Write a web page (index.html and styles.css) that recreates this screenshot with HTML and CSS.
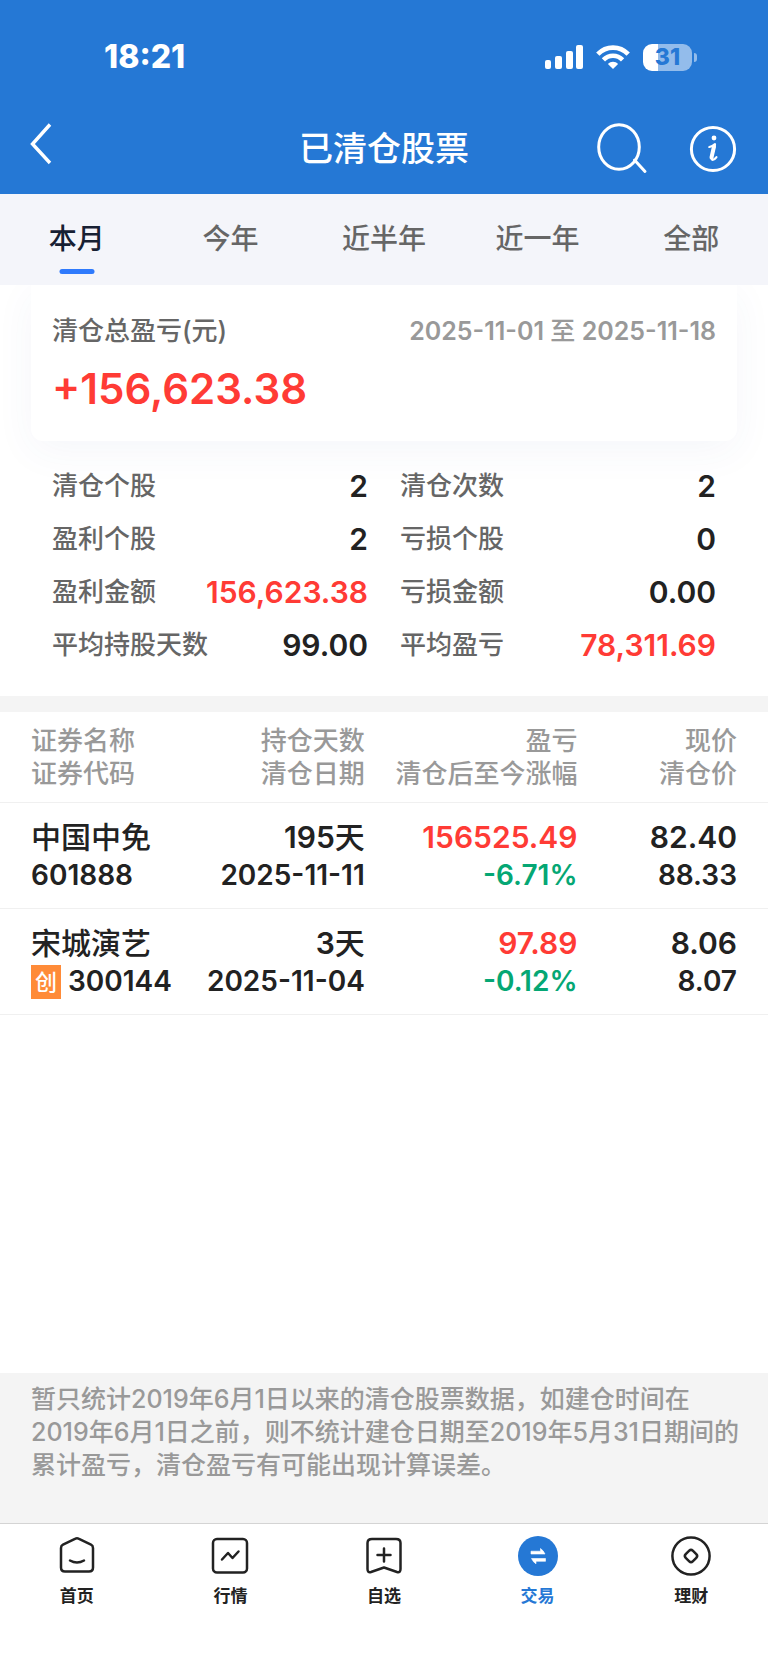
FILE: index.html
```html
<!DOCTYPE html>
<html lang="zh-CN">
<head>
<meta charset="utf-8">
<meta name="viewport" content="width=device-width, initial-scale=1">
<title>已清仓股票</title>
<link rel="stylesheet" href="styles.css">
</head>
<body>
<header class="header">
  <div class="status">
    <time class="status-time">18:21</time>
    <div class="status-icons">
      <svg class="signal" viewBox="0 0 38 24" fill="currentColor" aria-hidden="true">
        <rect x="0" y="15" width="6" height="9" rx="2"/>
        <rect x="10" y="11" width="7" height="13" rx="2"/>
        <rect x="21" y="6" width="7" height="18" rx="2"/>
        <rect x="31" y="0" width="7" height="24" rx="2"/>
      </svg>
      <svg class="wifi" viewBox="0 0 34 24" fill="none" stroke="currentColor" stroke-width="4.6" aria-hidden="true">
        <path d="M1.8 9.2C10.2 .4 23.8 .4 32.2 9.2"/>
        <path d="M7.4 14.9C12.8 9.4 21.2 9.4 26.6 14.9"/>
        <path d="M17 24L11.9 18.9C14.8 16.1 19.2 16.1 22.1 18.9Z" fill="currentColor" stroke="none"/>
      </svg>
      <div class="battery"><span class="battery-level">31</span></div>
    </div>
  </div>
  <div class="navbar">
    <button class="icon-button" type="button" aria-label="返回">
      <svg viewBox="0 0 56 56" fill="none" stroke="currentColor" stroke-width="3.4"><path d="M22 3.500L4.500 23L22 42"/></svg>
    </button>
    <h1 class="title">已清仓股票</h1>
    <div class="actions">
      <button class="icon-button" type="button" aria-label="搜索">
        <svg viewBox="0 0 56 56" fill="none" stroke="currentColor" stroke-width="3"><ellipse cx="27" cy="26" rx="20.3" ry="22.3"/><path d="M42.5 39L53 50.5" stroke-linecap="round"/></svg>
      </button>
      <button class="icon-button" type="button" aria-label="说明">
        <svg viewBox="0 0 56 56" fill="none" stroke="currentColor" stroke-width="3" stroke-linecap="round" stroke-linejoin="round"><circle cx="29" cy="28" r="21.6"/><circle cx="30" cy="17" r="2.4" fill="currentColor" stroke="none"/><path d="M25.3 26C27.5 25.6 29.5 24.5 31 23.2C30.4 28 27.8 33.500 27.600 37.200C27.500 39.800 30 39 32.400 36.200" stroke-width="2.200"/><path d="M30 25.500L27.500 36.500" stroke-width="4"/></svg>
      </button>
    </div>
  </div>
</header>

<nav class="tabs" aria-label="统计区间">
  <button class="tab tab-active" type="button">本月</button>
  <button class="tab" type="button">今年</button>
  <button class="tab" type="button">近半年</button>
  <button class="tab" type="button">近一年</button>
  <button class="tab" type="button">全部</button>
</nav>

<main class="content">
  <section class="overview">
    <div class="card">
      <div class="card-head">
        <h2 class="card-label">清仓总盈亏(元)</h2>
        <p class="card-range">2025-11-01 <span class="cjk">至</span> 2025-11-18</p>
      </div>
      <p class="card-total">+156,623.38</p>
    </div>
    <dl class="stats">
      <div class="stat"><dt>清仓个股</dt><dd>2</dd></div>
      <div class="stat"><dt>清仓次数</dt><dd>2</dd></div>
      <div class="stat"><dt>盈利个股</dt><dd>2</dd></div>
      <div class="stat"><dt>亏损个股</dt><dd>0</dd></div>
      <div class="stat"><dt>盈利金额</dt><dd class="up">156,623.38</dd></div>
      <div class="stat"><dt>亏损金额</dt><dd>0.00</dd></div>
      <div class="stat"><dt>平均持股天数</dt><dd>99.00</dd></div>
      <div class="stat"><dt>平均盈亏</dt><dd class="up">78,311.69</dd></div>
    </dl>
  </section>

  <table class="records">
    <thead>
      <tr>
        <th class="col-name" scope="col">证券名称<br>证券代码</th>
        <th class="col-days" scope="col">持仓天数<br>清仓日期</th>
        <th class="col-profit" scope="col">盈亏<br>清仓后至今涨幅</th>
        <th class="col-price" scope="col">现价<br>清仓价</th>
      </tr>
    </thead>
    <tbody>
      <tr>
        <td><div class="main-line cjk">中国中免</div><div class="sub-line">601888</div></td>
        <td><div class="main-line">195<span class="cjk">天</span></div><div class="sub-line">2025-11-11</div></td>
        <td><div class="main-line up">156525.49</div><div class="sub-line down">-6.71%</div></td>
        <td><div class="main-line">82.40</div><div class="sub-line">88.33</div></td>
      </tr>
      <tr>
        <td><div class="main-line cjk">宋城演艺</div><div class="sub-line code"><span class="board">创</span>300144</div></td>
        <td><div class="main-line">3<span class="cjk">天</span></div><div class="sub-line">2025-11-04</div></td>
        <td><div class="main-line up">97.89</div><div class="sub-line down">-0.12%</div></td>
        <td><div class="main-line">8.06</div><div class="sub-line">8.07</div></td>
      </tr>
    </tbody>
  </table>

  <p class="notice">暂只统计2019年6月1日以来的清仓股票数据，如建仓时间在<br>2019年6月1日之前，则不统计建仓日期至2019年5月31日期间的<br>累计盈亏，清仓盈亏有可能出现计算误差。</p>
</main>

<nav class="tabbar" aria-label="主导航">
  <a class="tabbar-item" href="#home">
    <svg viewBox="0 0 40 40" fill="none" stroke="currentColor" stroke-width="2.500" stroke-linecap="round" stroke-linejoin="round"><path d="M18.500 2.700Q20 1.900 21.500 2.700L34 8.700Q36 9.700 36 12V31.500Q36 35.500 32 35.500H8Q4 35.500 4 31.500V12Q4 9.700 6 8.700Z"/><path d="M13 24.500Q20 28.500 27 24.500"/></svg>
    <span>首页</span>
  </a>
  <a class="tabbar-item" href="#market">
    <svg viewBox="0 0 40 40" fill="none" stroke="currentColor" stroke-width="2.500" stroke-linecap="round" stroke-linejoin="round"><rect x="3" y="3" width="34" height="33.500" rx="4"/><path d="M12 23.500L18 17L22.500 22L28.500 15.500"/></svg>
    <span>行情</span>
  </a>
  <a class="tabbar-item" href="#watchlist">
    <svg viewBox="0 0 40 40" fill="none" stroke="currentColor" stroke-width="2.500" stroke-linecap="round" stroke-linejoin="round"><path d="M8 3H32Q36.500 3 36.500 7V33Q36.500 37 33 36L20 31.500L7 36Q3.500 37 3.500 33V7Q3.500 3 8 3Z"/><path d="M20 12.500V25.500M13.500 19H26.500"/></svg>
    <span>自选</span>
  </a>
  <a class="tabbar-item tabbar-active" href="#trade" aria-current="page">
    <svg viewBox="0 0 40 40"><circle cx="20" cy="20" r="20" fill="currentColor"/><path d="M13 15.200H22.500V12.500Q25.500 14.500 27 18H13ZM27.500 22.500H13.500Q15 26 18 27.800V25.300H27.500Z" fill="#fff" stroke="#fff" stroke-width=".6"/></svg>
    <span>交易</span>
  </a>
  <a class="tabbar-item" href="#wealth">
    <svg viewBox="0 0 40 40" fill="none" stroke="currentColor" stroke-width="2.500"><circle cx="20" cy="20" r="18.600"/><rect x="15" y="15" width="10" height="10" rx="2.500" transform="rotate(45 20 20)"/></svg>
    <span>理财</span>
  </a>
</nav>
</body>
</html>
```
FILE: styles.css
```css
* {
  box-sizing: border-box;
}

:root {
  --blue: #2578d5;
  --red: #ff3b35;
  --green: #05a774;
  --ink: #222;
  --label: #666;
  --muted: #999;
}

body {
  margin: 0;
  min-height: 100vh;
  display: flex;
  flex-direction: column;
  background: #fff;
  color: var(--ink);
  font-family: Inter, "Noto Sans CJK SC", sans-serif;
  font-weight: 500;
}

h1, h2, p, dl, dd {
  margin: 0;
  font-weight: inherit;
}

button {
  padding: 0;
  border: 0;
  background: none;
  color: inherit;
  font: inherit;
}

.header {
  background: var(--blue);
  color: #fff;
}

.status {
  display: flex;
  justify-content: space-between;
  align-items: center;
  height: 104px;
  padding: 10px 76px 0 104px;
}

.status-time {
  font-size: 32px;
  font-weight: 800;
  line-height: 32px;
}

.status-icons {
  display: flex;
  align-items: center;
  gap: 13px;
}

.signal {
  width: 38px;
  height: 24px;
}

.wifi {
  width: 34px;
  height: 24px;
}

.battery {
  position: relative;
  width: 49px;
  height: 27px;
  border-radius: 9px;
  background: linear-gradient(to right, #fff 15px, #93bceb 15px);
  color: var(--blue);
  font-size: 23px;
  font-weight: 800;
  line-height: 27px;
  text-align: center;
}

.battery::after {
  content: "";
  position: absolute;
  top: 9px;
  right: -5px;
  width: 3px;
  height: 9px;
  border-radius: 0 4px 4px 0;
  background: #93bceb;
}

.navbar {
  display: grid;
  grid-template-columns: 1fr auto 1fr;
  align-items: center;
  height: 90px;
  padding: 0 28px;
}

.icon-button {
  width: 56px;
  height: 56px;
}

.icon-button svg {
  display: block;
}

.title {
  font-size: 34px;
  line-height: 48px;
}

.actions {
  display: flex;
  justify-content: flex-end;
  gap: 36px;
}

.tabs {
  display: grid;
  grid-template-columns: repeat(5, 1fr);
  height: 91px;
  background: #f4f5fa;
}

.tab {
  position: relative;
  color: var(--label);
  font-size: 28px;
  line-height: 91px;
}

.tab-active {
  color: #172033;
}

.tab-active::after {
  content: "";
  position: absolute;
  bottom: 11px;
  left: 50%;
  width: 35px;
  height: 5px;
  border-radius: 3px;
  background: #2f7afc;
  transform: translateX(-50%);
}

.content {
  flex: 1;
  display: flex;
  flex-direction: column;
}

.cjk {
  font-weight: 500;
}

.overview {
  overflow: hidden;
  border-bottom: 16px solid #f4f4f4;
}

.card {
  height: 156px;
  margin: 0 31px;
  padding: 28px 21px 0;
  border-radius: 0 0 12px 12px;
  background: #fff;
  box-shadow: 0 10px 40px rgba(60, 80, 160, 0.05);
}

.card-head {
  display: flex;
  justify-content: space-between;
  align-items: center;
  line-height: 36px;
}

.card-label {
  color: var(--label);
  font-size: 26px;
}

.card-range {
  color: var(--muted);
  font-size: 25px;
  font-weight: 600;
}

.card-total {
  margin-top: 14px;
  color: var(--red);
  font-size: 42px;
  font-weight: 600;
  line-height: 52px;
}

.stats {
  position: relative;
  display: grid;
  grid-template-columns: 1fr 1fr;
  column-gap: 32px;
  row-gap: 17px;
  padding: 27px 52px 33px;
}

.stat {
  display: flex;
  justify-content: space-between;
  align-items: center;
  line-height: 36px;
}

.stat dt {
  color: var(--label);
  font-size: 26px;
}

.stat dd {
  font-size: 30px;
  font-weight: 600;
}

.up {
  color: var(--red);
}

.down {
  color: var(--green);
}

.records {
  width: 100%;
  border-collapse: collapse;
  table-layout: fixed;
  text-align: right;
}

.records th,
.records td {
  padding: 0;
  border-bottom: 1px solid #f0f0f0;
  white-space: nowrap;
}

.records th {
  padding: 12px 0;
  color: var(--muted);
  font-size: 26px;
  font-weight: 500;
  line-height: 33px;
}

.records td {
  padding: 13px 0 15px;
  font-weight: 600;
}

.records th:first-child,
.records td:first-child {
  padding-left: 31px;
  text-align: left;
}

.records th:last-child,
.records td:last-child {
  padding-right: 31px;
}

.col-name {
  width: 24%;
}

.col-days {
  width: 23.5%;
}

.col-profit {
  width: 27.7%;
}

.main-line {
  font-size: 30px;
  line-height: 42px;
}

.sub-line {
  font-size: 28px;
  line-height: 35px;
}

.code {
  display: flex;
  align-items: center;
  gap: 7px;
}

.board {
  width: 30px;
  height: 34px;
  background: #ff8b38;
  color: #fff;
  font-size: 22px;
  font-weight: 500;
  line-height: 34px;
  text-align: center;
}

.notice {
  margin-top: auto;
  padding: 10px 24px 41px 31px;
  background: #f4f4f4;
  color: var(--muted);
  font-size: 25px;
  line-height: 33px;
}

.tabbar {
  display: grid;
  grid-template-columns: repeat(5, 1fr);
  height: 146px;
  padding-top: 12px;
  border-top: 1px solid #d4d4d4;
}

.tabbar-item {
  display: flex;
  flex-direction: column;
  align-items: center;
  gap: 8px;
  color: var(--ink);
  font-size: 17px;
  font-weight: 700;
  line-height: 24px;
  text-decoration: none;
}

.tabbar-item svg {
  width: 40px;
  height: 40px;
}

.tabbar-active {
  color: var(--blue);
}
```
